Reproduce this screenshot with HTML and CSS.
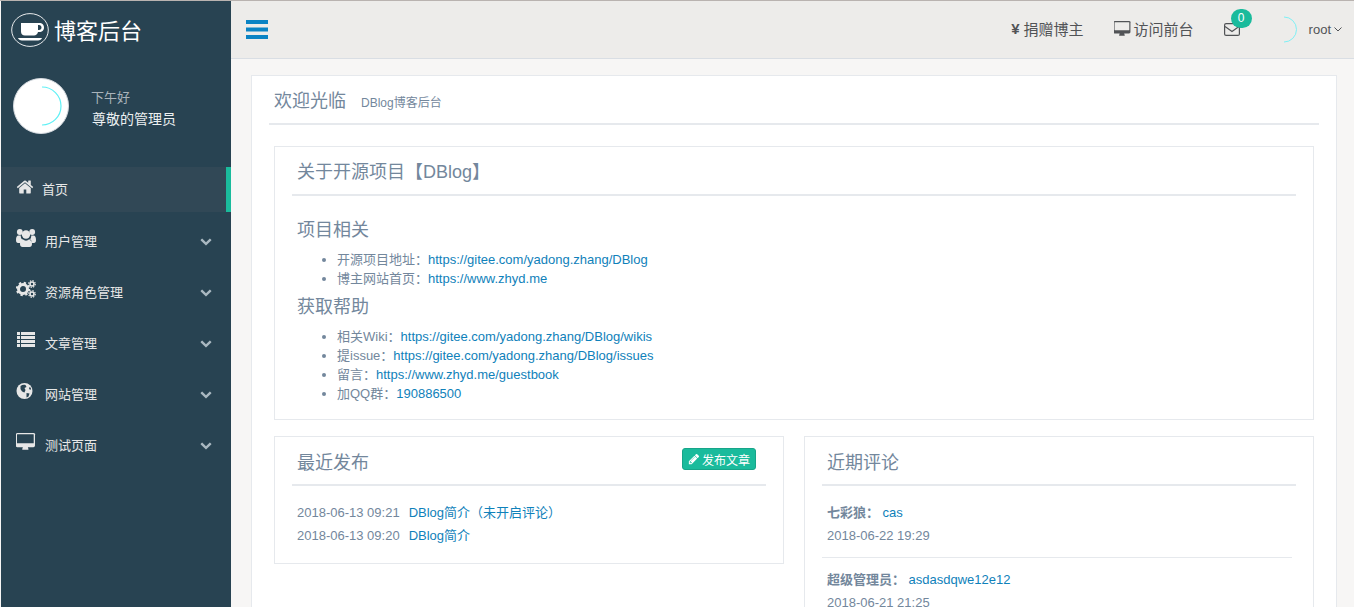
FILE: index.html
```html
<!DOCTYPE html>
<html lang="en">
<head>
  <meta charset="UTF-8" />
  <meta name="viewport" content="width=device-width, initial-scale=1.0" />
  <title>博客后台</title>
  <link rel="stylesheet" href="styles.css">
</head>
<body>
  <aside class="sidebar">
    <div class="brand">
      <span class="brand-icon">
        <svg viewBox="0 0 38 34" width="38" height="34"><ellipse cx="19" cy="17" rx="18.3" ry="16.4" fill="none" stroke="#e8eaec" stroke-width="1"/><path fill="#fff" d="M10 10h18c3.500 0 5 2 5 4.500s-1.500 4.500-5 4.500h-1c-.5 2-2 3.500-4 3.500h-9c-2.500 0-4-1.500-4-4zM27 12v5h1c1.500 0 2.500-1 2.500-2.500S29.500 12 28 12zM7 25h24c-.5 1.500-2 2.500-4 2.500H11c-2 0-3.500-1-4-2.500z" fill-rule="evenodd"/></svg>
      </span>
      <span class="brand-name">博客后台</span>
    </div>

    <div class="profile">
      <svg class="profile-pic" viewBox="0 0 56 56" width="56" height="56"><circle cx="28" cy="28" r="27.500" fill="#fff" stroke="#d5dadf"/><path d="M29 9a19 19 0 0 1 0 38" fill="none" stroke="#5ff0f5" stroke-width="1.200"/></svg>
      <div class="profile-info">
        <span class="greeting">下午好</span>
        <span class="user-title">尊敬的管理员</span>
      </div>
    </div>

    <ul class="menu">
      <li class="menu-item active">
        <svg class="menu-icon home-icon" viewBox="0 0 1792 1792"><path d="M1472 992v480q0 26-19 45t-45 19h-384v-384h-256v384h-384q-26 0-45-19t-19-45v-480q0-1 .5-3t.5-3l575-474 575 474q1 2 1 6zm223-69l-62 74q-8 9-21 11h-3q-13 0-21-7l-692-577-692 577q-12 8-24 7-13-2-21-11l-62-74q-8-10-7-23.500t11-21.500l719-599q32-26 76-26t76 26l244 204v-195q0-14 9-23t23-9h192q14 0 23 9t9 23v408l219 182q10 8 11 21.500t-7 23.500z"/></svg>
        <span>首页</span>
      </li>
      <li class="menu-item">
        <svg class="menu-icon" viewBox="0 0 20 18"><circle cx="3.800" cy="3" r="2.900"/><circle cx="16.200" cy="3" r="2.900"/><circle cx="10" cy="5.500" r="4.200"/><path d="M0 11c0-3 .8-4.500 2.500-4.500h2.300c-.2 1.800.5 3.300 1.700 4.200-1.300.6-2.300 1.800-2.500 3.300H2c-1.200 0-2-.8-2-3zM20 11c0-3-.8-4.500-2.500-4.500h-2.300c.2 1.800-.5 3.300-1.700 4.200 1.300.6 2.300 1.800 2.500 3.300H18c1.200 0 2-.8 2-3zM6.800 10.300c.9.900 2 1.400 3.200 1.400s2.300-.5 3.200-1.400c1.800 0 2.800 2 2.800 4.700 0 2-1 3-2.500 3h-7C5 18 4 17 4 15c0-2.700 1-4.700 2.800-4.700z"/></svg>
        <span>用户管理</span>
        <svg class="chevron" viewBox="0 0 1792 1792"><path d="M1683 808l-742 741q-19 19-45 19t-45-19l-742-741q-19-19-19-45.500t19-45.500l166-165q19-19 45-19t45 19l531 531 531-531q19-19 45-19t45 19l166 165q19 19 19 45.500t-19 45.500z"/></svg>
      </li>
      <li class="menu-item">
        <svg class="menu-icon" viewBox="0 0 20 18"><circle cx="7" cy="9" r="4.500" fill="none" stroke="#e7e7e7" stroke-width="3"/><circle cx="7" cy="9" r="6.200" fill="none" stroke="#e7e7e7" stroke-width="2" stroke-dasharray="2.300 2.570"/><circle cx="16" cy="4" r="2" fill="none" stroke="#e7e7e7" stroke-width="1.600"/><circle cx="16" cy="4" r="3.300" fill="none" stroke="#e7e7e7" stroke-width="1.200" stroke-dasharray="1.400 1.190"/><circle cx="16" cy="14" r="2" fill="none" stroke="#e7e7e7" stroke-width="1.600"/><circle cx="16" cy="14" r="3.300" fill="none" stroke="#e7e7e7" stroke-width="1.200" stroke-dasharray="1.400 1.190"/></svg>
        <span>资源角色管理</span>
        <svg class="chevron" viewBox="0 0 1792 1792"><path d="M1683 808l-742 741q-19 19-45 19t-45-19l-742-741q-19-19-19-45.500t19-45.500l166-165q19-19 45-19t45 19l531 531 531-531q19-19 45-19t45 19l166 165q19 19 19 45.500t-19 45.500z"/></svg>
      </li>
      <li class="menu-item">
        <svg class="menu-icon" viewBox="0 0 20 18"><path d="M1 1h3v3H1zM5 1h14v3H5zM1 5h3v3H1zM5 5h14v3H5zM1 9h3v3H1zM5 9h14v3H5zM1 13h3v3H1zM5 13h14v3H5z"/></svg>
        <span>文章管理</span>
        <svg class="chevron" viewBox="0 0 1792 1792"><path d="M1683 808l-742 741q-19 19-45 19t-45-19l-742-741q-19-19-19-45.500t19-45.500l166-165q19-19 45-19t45 19l531 531 531-531q19-19 45-19t45 19l166 165q19 19 19 45.500t-19 45.500z"/></svg>
      </li>
      <li class="menu-item">
        <svg class="menu-icon" viewBox="0 0 20 18"><circle cx="8.500" cy="9" r="8"/><path fill="#284352" d="M4.500 4c1.500-1 3-1.500 5-1l1 2-2 1 1 2-1 2.500C6.500 10 5 8.500 4.500 7zM10.500 11l3 .5-1 3-2 1zM13.500 5l1.500 1-.5 2-1.500-1z"/></svg>
        <span>网站管理</span>
        <svg class="chevron" viewBox="0 0 1792 1792"><path d="M1683 808l-742 741q-19 19-45 19t-45-19l-742-741q-19-19-19-45.500t19-45.500l166-165q19-19 45-19t45 19l531 531 531-531q19-19 45-19t45 19l166 165q19 19 19 45.500t-19 45.500z"/></svg>
      </li>
      <li class="menu-item">
        <svg class="menu-icon" viewBox="0 0 1920 1792"><path d="M1728 992v-832q0-13-9.500-22.500t-22.500-9.500h-1600q-13 0-22.500 9.500t-9.500 22.500v832q0 13 9.500 22.500t22.500 9.500h1600q13 0 22.500-9.500t9.500-22.500zm128-832v1088q0 66-47 113t-113 47h-544q0 37 16 77.500t32 71 16 43.500q0 26-19 45t-45 19h-512q-26 0-45-19t-19-45q0-14 16-44t32-70 16-78h-544q-66 0-113-47t-47-113v-1088q0-66 47-113t113-47h1632q66 0 113 47t47 113z"/></svg>
        <span>测试页面</span>
        <svg class="chevron" viewBox="0 0 1792 1792"><path d="M1683 808l-742 741q-19 19-45 19t-45-19l-742-741q-19-19-19-45.500t19-45.500l166-165q19-19 45-19t45 19l531 531 531-531q19-19 45-19t45 19l166 165q19 19 19 45.500t-19 45.500z"/></svg>
      </li>
    </ul>
  </aside>

  <div class="main">
    <header class="topbar">
      <svg class="toggle" viewBox="0 0 22 19"><path d="M0 0h22v4H0zM0 7.500h22v4H0zM0 15h22v4H0z"/></svg>
      <nav class="top-nav">
        <a class="top-link"><span class="yen">¥</span>捐赠博主</a>
        <a class="top-link">
          <svg class="desktop-icon" viewBox="0 0 1920 1792"><path d="M1728 992v-832q0-13-9.500-22.500t-22.500-9.500h-1600q-13 0-22.500 9.500t-9.500 22.500v832q0 13 9.500 22.500t22.500 9.500h1600q13 0 22.500-9.500t9.500-22.500zm128-832v1088q0 66-47 113t-113 47h-544q0 37 16 77.500t32 71 16 43.500q0 26-19 45t-45 19h-512q-26 0-45-19t-19-45q0-14 16-44t32-70 16-78h-544q-66 0-113-47t-47-113v-1088q0-66 47-113t113-47h1632q66 0 113 47t47 113z"/></svg>访问前台
        </a>
        <a class="mail">
          <svg viewBox="0 0 16 13" width="16" height="13"><rect x=".6" y=".6" width="14.800" height="11.800" rx="1.500" fill="none" stroke="#515356" stroke-width="1.200"/><path d="M1 3.500l7 5 7-5" fill="none" stroke="#515356" stroke-width="1.200"/></svg>
          <span class="badge">0</span>
        </a>
        <a class="user-menu">
          <svg class="user-pic" viewBox="0 0 29 29" width="29" height="29"><path d="M14 2a12.500 12.500 0 0 1 0 25" fill="none" stroke="#7ff0f5" stroke-width="1"/></svg>
          <span>root</span>
          <svg class="angle" viewBox="0 0 8 5" width="8" height="5"><path d="M.5.500L4 4 7.500.5" fill="none" stroke="#515356"/></svg>
        </a>
      </nav>
    </header>

    <main class="content">
      <section class="page-panel">
        <div class="page-title">
          <h3>欢迎光临</h3>
          <small>DBlog博客后台</small>
        </div>

        <div class="panel about">
          <div class="panel-title"><h2>关于开源项目【DBlog】</h2></div>
          <h3 class="sub-title first">项目相关</h3>
          <ul class="link-list">
            <li>开源项目地址：<a>https://gitee.com/yadong.zhang/DBlog</a></li>
            <li>博主网站首页：<a>https://www.zhyd.me</a></li>
          </ul>
          <h3 class="sub-title">获取帮助</h3>
          <ul class="link-list">
            <li>相关Wiki：<a>https://gitee.com/yadong.zhang/DBlog/wikis</a></li>
            <li>提issue：<a>https://gitee.com/yadong.zhang/DBlog/issues</a></li>
            <li>留言：<a>https://www.zhyd.me/guestbook</a></li>
            <li>加QQ群：<a>190886500</a></li>
          </ul>
        </div>

        <div class="columns">
          <div class="panel recent">
            <div class="panel-title">
              <h2>最近发布</h2>
              <a class="btn-publish">
                <svg viewBox="0 0 1792 1792" width="12" height="12"><path d="M491 1536l91-91-235-235-91 91v107h128v128h107zm523-928q0-22-22-22-10 0-17 7l-542 542q-7 7-7 17 0 22 22 22 10 0 17-7l542-542q7-7 7-17zm-54-192l416 416-832 832h-416v-416zm683 96q0 53-37 90l-166 166-416-416 166-165q36-38 90-38 53 0 91 38l235 234q37 39 37 91z" fill="#fff"/></svg>发布文章
              </a>
            </div>
            <ul class="post-list">
              <li>2018-06-13 09:21<a>DBlog简介（未开启评论）</a></li>
              <li>2018-06-13 09:20<a>DBlog简介</a></li>
            </ul>
          </div>

          <div class="panel comments">
            <div class="panel-title"><h2>近期评论</h2></div>
            <div class="comment">
              <p><b>七彩狼：</b><a>cas</a></p>
              <p>2018-06-22 19:29</p>
            </div>
            <div class="comment">
              <p><b>超级管理员：</b><a>asdasdqwe12e12</a></p>
              <p>2018-06-21 21:25</p>
            </div>
          </div>
        </div>
      </section>
    </main>
  </div>
</body>
</html>
```

FILE: styles.css
```css
:root {
  --side-bg: #284352;
  --text: #73879c;
  --line: #e6e9ed;
  --green: #1abb9c;
  --link: #0f81ba;
}

* {
  box-sizing: border-box;
}

html, body {
  height: 607px;
  overflow: hidden;
}

body {
  margin: 0;
  padding-left: 1px;
  display: flex;
  align-items: stretch;
  border-top: 1px solid #b9b3b0;
  background: #f7f6f5;
  color: var(--text);
  font-family: "Liberation Sans", "Noto Sans CJK SC", sans-serif;
  font-size: 13px;
}

ul {
  margin: 0;
  padding: 0;
  list-style: none;
}

a {
  color: var(--link);
  text-decoration: none;
}

/* sidebar */
.sidebar {
  width: 230px;
  flex-shrink: 0;
  background: var(--side-bg);
}

.brand {
  display: flex;
  align-items: center;
  height: 57px;
  padding-left: 10px;
  color: #fff;
}

.brand-icon {
  display: flex;
  margin-right: 5px;
}

.brand-name {
  font-size: 22px;
  margin-top: -2px;
}

.profile {
  display: flex;
  align-items: center;
  height: 56px;
  margin-top: 20px;
  padding-left: 12px;
}

.profile-pic {
  flex-shrink: 0;
}

.profile-info {
  display: flex;
  flex-direction: column;
  gap: 5px;
  margin: 4px 0 0 22px;
}

.greeting {
  color: #a9b3ba;
  line-height: 17px;
}

.user-title {
  color: #ecf0f1;
  font-size: 14px;
  line-height: 17px;
  margin-left: 1px;
}

.menu {
  margin-top: 33px;
}

.menu-item {
  display: flex;
  align-items: center;
  height: 45px;
  margin-bottom: 6px;
  padding: 0 19px 0 15px;
  color: #e7e7e7;
}

.menu-item.active {
  background: #314856;
  border-right: 5px solid var(--green);
  padding-bottom: 2px;
}

.menu-icon {
  width: 20px;
  height: 18px;
  margin: -6px 9px 0 0;
  fill: #e7e7e7;
  flex-shrink: 0;
}

.home-icon {
  width: 18px;
  margin: -4px 8px 0 0;
}

.chevron {
  width: 12px;
  height: 12px;
  margin: 1px 0 0 auto;
  fill: #a9b8c1;
}

/* top bar */
.main {
  flex: 1;
  min-width: 0;
}

.topbar {
  display: flex;
  align-items: center;
  justify-content: space-between;
  height: 58px;
  padding: 0 12px 0 15px;
  background: #edecea;
  border-bottom: 1px solid #d9dee4;
}

.toggle {
  width: 22px;
  height: 19px;
  fill: #0a83c4;
}

.top-nav {
  display: flex;
  align-items: center;
}

.top-link {
  display: flex;
  align-items: center;
  margin: -2px 30px 0 0;
  color: #515356;
  font-size: 15px;
}

.yen {
  margin-right: 4px;
  font-weight: bold;
}

.desktop-icon {
  width: 17px;
  height: 16px;
  margin-right: 3px;
  fill: #515356;
}

.mail {
  display: flex;
  position: relative;
  margin-right: 30px;
}

.badge {
  position: absolute;
  top: -14px;
  left: 7px;
  width: 21px;
  height: 19px;
  border-radius: 10px;
  background: var(--green);
  color: #fff;
  font-size: 12px;
  line-height: 19px;
  text-align: center;
}

.user-menu {
  display: flex;
  align-items: center;
  color: #515356;
  font-size: 13px;
}

.user-pic {
  margin-right: 10px;
}

.angle {
  margin-left: 3px;
}

/* content */
.content {
  padding: 16px 17px 0 20px;
}

.page-panel {
  height: 560px;
  padding: 0 17px;
  background: #fff;
  border: 1px solid var(--line);
}

.page-title {
  display: flex;
  align-items: baseline;
  height: 49px;
  padding: 10px 0 0 5px;
  border-bottom: 2px solid var(--line);
}

.page-title h3 {
  margin: 0 15px 0 0;
  font-size: 18px;
  font-weight: 400;
}

.page-title small {
  font-size: 12px;
}

.panel {
  padding: 0 17px;
  background: #fff;
  border: 1px solid var(--line);
}

.about {
  height: 274px;
  margin: 21px 5px 0;
}

.panel-title {
  display: flex;
  justify-content: space-between;
  height: 49px;
  border-bottom: 2px solid var(--line);
  padding: 13px 10px 0 5px;
}

.columns .panel-title {
  padding-top: 14px;
}

.panel-title h2 {
  margin: 0;
  font-size: 18px;
  font-weight: 400;
  line-height: 25px;
}

.sub-title {
  margin: 0 0 8px 5px;
  font-size: 18px;
  font-weight: 400;
  line-height: 24px;
}

.sub-title.first {
  margin-top: 22px;
}

.link-list {
  margin-left: 45px;
  margin-bottom: 7px;
  list-style: disc;
  line-height: 19px;
}

.columns {
  display: flex;
  gap: 20px;
  margin: 16px 5px 0;
}

.columns .panel {
  flex: 1;
  min-width: 0;
}

.recent {
  height: 128px;
}

.btn-publish {
  display: flex;
  align-items: center;
  gap: 2px;
  height: 22px;
  margin-top: -3px;
  padding: 0 5px;
  border: 1px solid #17a589;
  border-radius: 3px;
  background: var(--green);
  color: #fff;
  font-size: 12px;
}

.post-list {
  padding: 15px 0 0 5px;
  line-height: 23px;
}

.post-list a {
  margin-left: 9px;
}

.comments {
  height: 300px;
}

.comment {
  padding: 15px 5px 10px;
  margin-right: 4px;
  border-bottom: 1px solid var(--line);
}

.comment + .comment {
  padding-top: 10px;
}

.comment p {
  margin: 0;
  line-height: 23px;
}

.comment a {
  margin-left: 3.500px;
}

.comment b {
  font-weight: 700;
}
```
